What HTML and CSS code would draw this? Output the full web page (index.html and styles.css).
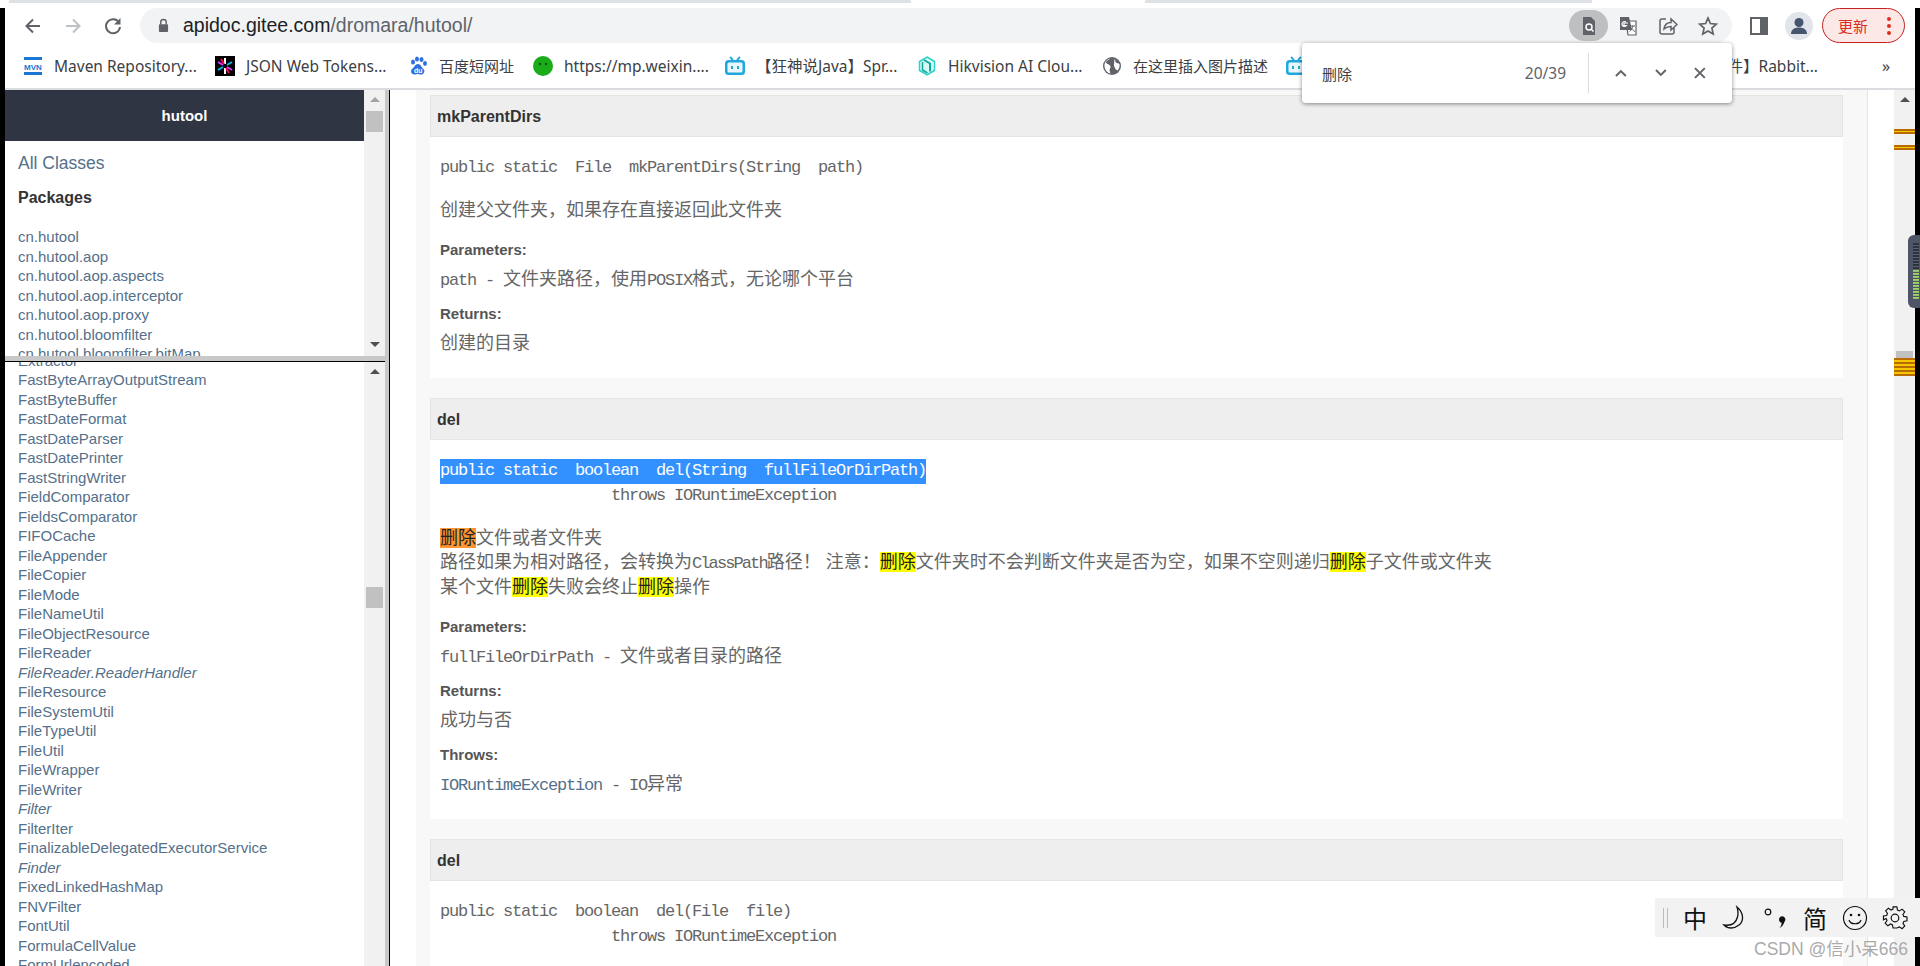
FILE: index.html
```html
<!DOCTYPE html>
<html lang="zh-CN">
<head>
    <meta charset="UTF-8">
    <title>hutool</title>
    <link rel="stylesheet" href="styles.css">
</head>
<body>
    <div class="tab-strip">
        <div class="tab-line tab-line-left"></div>
        <div class="tab-active"></div>
        <div class="tab-line tab-line-right"></div>
    </div>
    <div class="frame">
        <div class="toolbar">
            <div class="nav-buttons">
                <svg class="nav-icon" viewBox="0 0 20 20"><path d="M17 10H4M10 3.5L3.5 10l6.5 6.5" fill="none" stroke="#5f6368" stroke-width="2"/></svg>
                <svg class="nav-icon" viewBox="0 0 20 20"><path d="M3 10h13M10 3.5l6.500 6.500-6.500 6.500" fill="none" stroke="#bdc1c6" stroke-width="2"/></svg>
                <svg class="nav-icon" viewBox="0 0 20 20"><path d="M16 6.500A7 7 0 1 0 17 11" fill="none" stroke="#5f6368" stroke-width="2"/><path d="M17.500 2v6.500H11z" fill="#5f6368"/></svg>
            </div>
            <div class="address-bar">
                <svg class="lock" viewBox="0 0 12 16"><path d="M3 7V4.500a3 3 0 0 1 6 0V7" fill="none" stroke="#5f6368" stroke-width="1.600"/><rect x="1" y="6.500" width="10" height="8.500" rx="1" fill="#5f6368"/></svg>
                <span class="url">apidoc.gitee.com<span class="url-path">/dromara/hutool/</span></span>
                <div class="address-actions">
                    <span class="action-active">
                        <svg class="action-icon" viewBox="0 0 20 20"><path d="M4 1h8l4 4v14H4z" fill="#5f6368"/><circle cx="10" cy="11" r="3" fill="none" stroke="#fff" stroke-width="1.500"/><path d="M12 13l2.500 2.500" stroke="#fff" stroke-width="1.500"/></svg>
                    </span>
                    <svg class="action-icon" viewBox="0 0 20 20"><path d="M8 5h10v14H10z" fill="#fff" stroke="#5f6368" stroke-width="1.200"/><path d="M2 1h9l3 13H2z" fill="#5f6368"/><path d="M10 7H6v2.500h2.500A2.500 2.500 0 1 1 8 6" fill="none" stroke="#fff" stroke-width="1.200"/><path d="M12 10h5M15 9.500c-.4 3-2 5-3.500 6M13 12c1 1.500 2.500 3 4 3.500" fill="none" stroke="#5f6368"/></svg>
                    <svg class="action-icon" viewBox="0 0 20 20"><path d="M8 3H4a2 2 0 0 0-2 2v11a2 2 0 0 0 2 2h10a2 2 0 0 0 2-2v-4" fill="none" stroke="#5f6368" stroke-width="1.500"/><path d="M6 13c.5-4 3-6.500 7-6.500V3l6 5.500-6 5.500v-3.500c-3 0-5 .8-7 2.500z" fill="none" stroke="#5f6368" stroke-width="1.500"/></svg>
                    <svg class="action-icon" viewBox="0 0 20 20"><path d="M10 2l2.400 5.500 6 .6-4.500 4 1.300 5.900L10 15l-5.200 3 1.300-5.900-4.500-4 6-.6z" fill="none" stroke="#5f6368" stroke-width="1.700"/></svg>
                </div>
            </div>
            <div class="toolbar-right">
                <svg class="panel-icon" viewBox="0 0 18 18"><rect x="1" y="1" width="16" height="16" fill="none" stroke="#5f6368" stroke-width="2"/><rect x="10" y="1" width="7" height="16" fill="#5f6368"/></svg>
                <span class="avatar">
                    <svg viewBox="0 0 28 28" width="28" height="28"><circle cx="14" cy="10.500" r="4.500" fill="#46566d"/><path d="M6 22c0-4.500 3.500-6.500 8-6.500s8 2 8 6.500z" fill="#46566d"/></svg>
                </span>
                <span class="update-pill">
                    <span>更新</span>
                    <span class="update-dots"><i></i><i></i><i></i></span>
                </span>
            </div>
        </div>

        <div class="bookmarks">
            <a class="bookmark bm-1">
                <svg class="bm-icon" viewBox="0 0 20 20"><rect x="1" y="1" width="18" height="3" fill="#1976d2"/><rect x="1" y="16" width="18" height="3" fill="#1976d2"/><text x="10" y="13.500" text-anchor="middle" class="mvn-text">MVN</text></svg>
                <span>Maven Repository...</span>
            </a>
            <a class="bookmark bm-2">
                <svg class="bm-icon" viewBox="0 0 20 20"><rect width="20" height="20" fill="#000"/><path d="M10 2v6M10 12v6" stroke="#fff" stroke-width="2"/><path d="M3 6l5 3M12 11l5 3" stroke="#d63aff" stroke-width="2"/><path d="M3 14l5-3M12 9l5-3" stroke="#00b9f1" stroke-width="2"/><path d="M6 3l3 5M11 12l3 5" stroke="#fb015b" stroke-width="2"/></svg>
                <span>JSON Web Tokens...</span>
            </a>
            <a class="bookmark bm-3">
                <svg class="bm-icon" viewBox="0 0 20 20"><g fill="#2f6fe0"><ellipse cx="5" cy="6" rx="2" ry="2.600"/><ellipse cx="9" cy="3" rx="2" ry="2.600"/><ellipse cx="13.500" cy="3.500" rx="2" ry="2.600"/><ellipse cx="17" cy="7.500" rx="1.900" ry="2.400"/><path d="M10 8c3 0 3 3 5.500 5 2 2 .5 6-3 5.500-1-.2-1.500-.5-2.500-.5s-2 .5-3.500.5c-3.500 0-4.500-4-2-6C6.500 11 7 8 10 8z"/></g><text x="10.200" y="17" text-anchor="middle" class="du-text">du</text></svg>
                <span class="bm-cjk">百度短网址</span>
            </a>
            <a class="bookmark bm-4">
                <svg class="bm-icon" viewBox="0 0 20 20"><circle cx="10" cy="10" r="10" fill="#1aad19"/><circle cx="7" cy="8" r="1.300" fill="#0b5c0a"/><circle cx="13" cy="8" r="1.300" fill="#0b5c0a"/></svg>
                <span>https://mp.weixin....</span>
            </a>
            <a class="bookmark bm-5">
                <svg class="bm-icon" viewBox="0 0 20 20"><path d="M5 1l3 3M15 1l-3 3" stroke="#20a8dc" stroke-width="1.800"/><rect x="0" y="4" width="20" height="15" rx="3.500" fill="#20a8dc"/><rect x="2.500" y="6.500" width="15" height="10" rx="1.500" fill="#e9f7fc"/><rect x="6" y="10" width="2" height="3" fill="#20a8dc"/><rect x="12" y="10" width="2" height="3" fill="#20a8dc"/></svg>
                <span>【狂神说Java】Spr...</span>
            </a>
            <a class="bookmark bm-6">
                <svg class="bm-icon" viewBox="0 0 20 20"><path d="M10 1l7.500 4.500v9L10 19l-7.500-4.500v-9z" fill="#d4fbf6" stroke="#2ad4c6" stroke-width="1.500"/><path d="M7 4l6 3.500v8" fill="none" stroke="#16a59a" stroke-width="2"/><path d="M5.500 6v8l5 3" fill="none" stroke="#16a59a" stroke-width="1.500"/></svg>
                <span>Hikvision AI Clou...</span>
            </a>
            <a class="bookmark bm-7">
                <svg class="bm-icon" viewBox="0 0 20 20"><circle cx="10" cy="10" r="9" fill="#5f6368"/><path d="M8 2.500c-1 1.500-3.500 2-4 3.500s2.500 2 3.500 3 1.500 2 .5 3.500 0 3.500.5 5c-3-.5-5.500-3-6-7C2 7 4.500 3.500 8 2.500zM13 3c.5 1.500 0 2.500 1 3.500s2.500.5 3.500 1.500c.5 2.500-.5 5-2 6.500-1-.5-2-1-2.500-2.500s-1.500-2-1-4S12 4 13 3z" fill="#fff"/></svg>
                <span class="bm-cjk">在这里插入图片描述</span>
            </a>
            <a class="bookmark bm-8">
                <svg class="bm-icon" viewBox="0 0 20 20"><path d="M5 1l3 3M15 1l-3 3" stroke="#20a8dc" stroke-width="1.800"/><rect x="0" y="4" width="20" height="15" rx="3.500" fill="#20a8dc"/><rect x="2.500" y="6.500" width="15" height="10" rx="1.500" fill="#e9f7fc"/><rect x="6" y="10" width="2" height="3" fill="#20a8dc"/><rect x="12" y="10" width="2" height="3" fill="#20a8dc"/></svg>
                <span>件】Rabbit...</span>
            </a>
            <span class="bm-more">»</span>
        </div>

        <div class="window">
            <aside class="sidebar">
                <div class="pane pane-top">
                    <div class="pane-content">
                        <div class="project-title">hutool</div>
                        <a class="all-classes">All Classes</a>
                        <h4 class="packages-title">Packages</h4>
                        <ul class="class-list">
                            <li>cn.hutool</li>
                            <li>cn.hutool.aop</li>
                            <li>cn.hutool.aop.aspects</li>
                            <li>cn.hutool.aop.interceptor</li>
                            <li>cn.hutool.aop.proxy</li>
                            <li>cn.hutool.bloomfilter</li>
                            <li>cn.hutool.bloomfilter.bitMap</li>
                        </ul>
                    </div>
                    <div class="scrollbar">
                        <span class="arrow-up"></span>
                        <span class="thumb thumb-packages"></span>
                        <span class="arrow-down"></span>
                    </div>
                </div>
                <div class="splitter"></div>
                <div class="pane pane-bottom">
                    <div class="pane-content">
                        <ul class="class-list classes">
                            <li>Extractor</li>
                            <li>FastByteArrayOutputStream</li>
                            <li>FastByteBuffer</li>
                            <li>FastDateFormat</li>
                            <li>FastDateParser</li>
                            <li>FastDatePrinter</li>
                            <li>FastStringWriter</li>
                            <li>FieldComparator</li>
                            <li>FieldsComparator</li>
                            <li>FIFOCache</li>
                            <li>FileAppender</li>
                            <li>FileCopier</li>
                            <li>FileMode</li>
                            <li>FileNameUtil</li>
                            <li>FileObjectResource</li>
                            <li>FileReader</li>
                            <li class="iface">FileReader.ReaderHandler</li>
                            <li>FileResource</li>
                            <li>FileSystemUtil</li>
                            <li>FileTypeUtil</li>
                            <li>FileUtil</li>
                            <li>FileWrapper</li>
                            <li>FileWriter</li>
                            <li class="iface">Filter</li>
                            <li>FilterIter</li>
                            <li>FinalizableDelegatedExecutorService</li>
                            <li class="iface">Finder</li>
                            <li>FixedLinkedHashMap</li>
                            <li>FNVFilter</li>
                            <li>FontUtil</li>
                            <li>FormulaCellValue</li>
                            <li>FormUrlencoded</li>
                        </ul>
                    </div>
                    <div class="scrollbar">
                        <span class="arrow-up"></span>
                        <span class="thumb thumb-classes"></span>
                    </div>
                </div>
            </aside>

            <main class="main">
                <div class="doc-column">
                    <section class="method">
                        <h3 class="method-name">mkParentDirs</h3>
                        <div class="method-body">
                            <pre class="signature en">public static  File  mkParentDirs(String  path)</pre>
                            <p class="desc">创建父文件夹，如果存在直接返回此文件夹</p>
                            <h5 class="label">Parameters:</h5>
                            <p class="value"><span class="en">path - </span>文件夹路径，使用<span class="en">POSIX</span>格式，无论哪个平台</p>
                            <h5 class="label">Returns:</h5>
                            <p class="value">创建的目录</p>
                        </div>
                    </section>

                    <section class="method">
                        <h3 class="method-name">del</h3>
                        <div class="method-body">
                            <pre class="signature en"><span class="selected">public static  boolean  del(String  fullFileOrDirPath)</span>
                   throws IORuntimeException</pre>
                            <p class="desc"><mark class="current">删除</mark>文件或者文件夹<br>路径如果为相对路径，会转换为<span class="en en-tight">ClassPath</span>路径！ 注意：<mark>删除</mark>文件夹时不会判断文件夹是否为空，如果不空则递归<mark>删除</mark>子文件或文件夹<br>某个文件<mark>删除</mark>失败会终止<mark>删除</mark>操作</p>
                            <h5 class="label">Parameters:</h5>
                            <p class="value"><span class="en">fullFileOrDirPath - </span>文件或者目录的路径</p>
                            <h5 class="label">Returns:</h5>
                            <p class="value">成功与否</p>
                            <h5 class="label">Throws:</h5>
                            <p class="value"><span class="en link">IORuntimeException</span><span class="en"> - IO</span>异常</p>
                        </div>
                    </section>

                    <section class="method">
                        <h3 class="method-name">del</h3>
                        <div class="method-body">
                            <pre class="signature en">public static  boolean  del(File  file)
                   throws IORuntimeException</pre>
                        </div>
                    </section>
                </div>
                <div class="scrollbar scrollbar-main">
                    <span class="arrow-up"></span>
                    <span class="hit hit-a"></span>
                    <span class="hit hit-b"></span>
                    <span class="thumb thumb-main"></span>
                    <span class="hit-group"></span>
                </div>
            </main>
        </div>
    </div>

    <!-- find in page popup -->
    <div class="find-bar">
        <span class="find-text">删除</span>
        <span class="find-count">20/39</span>
        <span class="find-sep"></span>
        <svg class="find-icon" viewBox="0 0 16 16"><path d="M3 11l5-5 5 5" fill="none" stroke="#5f6368" stroke-width="2"/></svg>
        <svg class="find-icon" viewBox="0 0 16 16"><path d="M3 5l5 5 5-5" fill="none" stroke="#5f6368" stroke-width="2"/></svg>
        <svg class="find-icon" viewBox="0 0 16 16"><path d="M3 3l10 10M13 3L3 13" fill="none" stroke="#5f6368" stroke-width="2"/></svg>
    </div>

    <!-- floating widget on the window edge -->
    <div class="edge-widget">
        <span class="meter meter-off"></span>
        <span class="meter meter-on"></span>
    </div>

    <!-- input method toolbar -->
    <div class="ime-bar">
        <span class="ime-handle"></span>
        <span class="ime-item">中</span>
        <svg class="ime-svg" viewBox="0 0 26 26"><path d="M15 2c7 6 7 14 2 18-5 4-11 4-15 0 7 1 12-2 13.500-8C16.500 8 16 5 15 2z" fill="none" stroke="#111" stroke-width="1.300"/></svg>
        <svg class="ime-svg" viewBox="0 0 26 26"><circle cx="6" cy="7" r="2.800" fill="none" stroke="#111" stroke-width="1.200"/><path d="M17 14.500a3.200 3.200 0 1 1 5.500 2.200c-.8 2.800-2.500 5-5 6.300 1.200-1.500 2-3 2.200-5.300-1.500 0-2.700-1.500-2.700-3.200z" fill="#111"/></svg>
        <span class="ime-item">简</span>
        <svg class="ime-svg" viewBox="0 0 26 26"><circle cx="13" cy="13" r="11.500" fill="none" stroke="#111" stroke-width="1.200"/><circle cx="9" cy="10" r="1.300" fill="#111"/><circle cx="17" cy="10" r="1.300" fill="#111"/><path d="M7 15c1.500 5 10.500 5 12 0" fill="none" stroke="#111" stroke-width="1.200"/></svg>
        <svg class="ime-svg" viewBox="0 0 26 26"><circle cx="13" cy="13" r="3.800" fill="none" stroke="#111" stroke-width="1.200"/><path d="M11 2h4l.6 3.300 2 .9 2.800-1.900 2.800 2.800-1.900 2.800.9 2 3.300.6v4l-3.300.6-.9 2 1.900 2.800-2.800 2.800-2.800-1.900-2 .9L15 24h-4l-.6-3.300-2-.9-2.800 1.900-2.800-2.800 1.900-2.800-.9-2L1 15.500v-4l3.300-.6.900-2-1.900-2.800 2.800-2.800 2.800 1.900 2-.9z" transform="translate(.500 0) scale(.96)" fill="none" stroke="#111" stroke-width="1.200"/></svg>
    </div>
    <div class="watermark">CSDN @信小呆666</div>
</body>
</html>
```

FILE: styles.css
```css
* {
    box-sizing: border-box;
}

body {
    margin: 0;
    width: 1920px;
    height: 966px;
    overflow: hidden;
    position: relative;
    background-color: #fff;
    font-family: "Liberation Sans", "Noto Sans CJK SC", sans-serif;
}

/* tab strip */
.tab-strip {
    display: flex;
    height: 8px;
    background-color: #fff;
}

.tab-line {
    height: 3px;
    background-color: #dee1e6;
}

.tab-line-left {
    margin-left: 9px;
    width: 902px;
}

.tab-active {
    width: 234px;
}

.tab-line-right {
    width: 447px;
}

.frame {
    display: flex;
    flex-direction: column;
    height: 958px;
    border-left: 5px solid #000;
    border-right: 5px solid #000;
}

/* toolbar */
.toolbar {
    display: flex;
    align-items: center;
    height: 35px;
    flex-shrink: 0;
}

.nav-buttons {
    display: flex;
    gap: 20px;
    margin-left: 18px;
    width: 117px;
}

.nav-icon {
    width: 20px;
    height: 20px;
}

.address-bar {
    display: flex;
    align-items: center;
    width: 1592px;
    height: 35px;
    border-radius: 18px;
    background-color: #f1f3f4;
    padding-left: 18px;
}

.lock {
    width: 11px;
    height: 15px;
}

.url {
    margin-left: 14px;
    font-size: 19.500px;
    color: #202124;
}

.url-path {
    color: #5f6368;
}

.address-actions {
    display: flex;
    align-items: center;
    margin-left: auto;
    margin-right: 14px;
    gap: 20px;
}

.action-active {
    display: flex;
    align-items: center;
    justify-content: center;
    width: 39px;
    height: 31px;
    margin-right: -10px;
    border-radius: 16px;
    background-color: #bdbfc1;
}

.action-icon {
    width: 20px;
    height: 20px;
}

.toolbar-right {
    display: flex;
    align-items: center;
    margin-left: 18px;
}

.panel-icon {
    width: 18px;
    height: 18px;
}

.avatar {
    display: block;
    width: 28px;
    height: 28px;
    margin-left: 17px;
    border-radius: 50%;
    background-color: #e1e4ea;
}

.update-pill {
    display: flex;
    align-items: center;
    width: 83px;
    height: 35px;
    margin-left: 9px;
    padding-left: 15px;
    border: 1px solid #c5221f;
    border-radius: 18px;
    background-color: #fce8e6;
    color: #d93025;
    font-size: 15px;
}

.update-dots {
    display: flex;
    flex-direction: column;
    gap: 3px;
    margin-left: 19px;
}

.update-dots i {
    display: block;
    width: 4px;
    height: 4px;
    border-radius: 50%;
    background-color: #d93025;
}

/* bookmarks */
.bookmarks {
    display: flex;
    align-items: center;
    height: 47px;
    flex-shrink: 0;
    padding-left: 18px;
    border-bottom: 2px solid #dadce0;
    font-family: "Noto Sans", "Noto Sans CJK SC", sans-serif;
    font-size: 15.500px;
    color: #3c4043;
}

.bookmark {
    display: flex;
    align-items: center;
    gap: 11px;
    white-space: nowrap;
    overflow: hidden;
}

.bm-1 { width: 192px; }
.bm-2 { width: 193px; }
.bm-3 { width: 125px; }
.bm-4 { width: 192px; }
.bm-5 { width: 192px; }
.bm-6 { width: 185px; }
.bm-7 { width: 184px; }
.bm-8 { width: 532px; justify-content: space-between; }

.bm-cjk {
    font-size: 15px;
}

.bm-icon {
    width: 20px;
    height: 20px;
    flex-shrink: 0;
}

.bm-more {
    margin-left: 64px;
    font-size: 16px;
}

.mvn-text {
    font: bold 8px "Liberation Sans", sans-serif;
    fill: #1976d2;
}

.du-text {
    font: bold 7px "Liberation Sans", sans-serif;
    fill: #fff;
}

/* frames area */
.window {
    display: flex;
    flex: 1;
    min-height: 0;
}

.sidebar {
    display: flex;
    flex-direction: column;
    width: 385px;
    flex-shrink: 0;
    border-right: 1px solid #000;
    background-color: #c8c8c8;
    padding-right: 4px;
}

.pane {
    display: flex;
    background-color: #fff;
    overflow: hidden;
}

.pane-top {
    height: 266px;
}

.pane-bottom {
    flex: 1;
    min-height: 0;
}

.splitter {
    height: 6px;
    flex-shrink: 0;
    background-color: #c8c8c8;
    border-bottom: 1px solid #000;
}

.pane-content {
    width: 359px;
    overflow: hidden;
}

.project-title {
    height: 51px;
    line-height: 51px;
    text-align: center;
    background-color: #2f3542;
    color: #fff;
    font-size: 15px;
    font-weight: bold;
}

.all-classes {
    display: block;
    margin: 11px 0 0 13px;
    font-size: 17.500px;
    line-height: 22px;
    color: #55708a;
}

.packages-title {
    margin: 14px 0 0 13px;
    font-size: 16px;
    line-height: 20px;
    color: #333;
}

.class-list {
    list-style: none;
    margin: 19px 0 0 13px;
    padding: 0;
    font-size: 15px;
    line-height: 19.500px;
    color: #55708a;
    white-space: nowrap;
}

.classes {
    margin-top: -11.500px;
}

.iface {
    font-style: italic;
}

/* scrollbars */
.scrollbar {
    position: relative;
    width: 21px;
    flex-shrink: 0;
    background-color: #f1f1f1;
}

.arrow-up,
.arrow-down {
    position: absolute;
    left: 6px;
    width: 0;
    height: 0;
    border-left: 5px solid transparent;
    border-right: 5px solid transparent;
}

.arrow-up {
    top: 7px;
    border-bottom: 5px solid #505050;
}

.arrow-down {
    bottom: 9px;
    border-top: 5px solid #505050;
}

.pane-top .arrow-up {
    border-bottom-color: #a3a3a3;
}

.thumb {
    position: absolute;
    left: 2px;
    width: 17px;
    height: 21px;
    background-color: #c1c1c1;
}

.thumb-packages {
    top: 21px;
}

.thumb-classes {
    top: 225px;
}

.thumb-main {
    top: 261px;
}

.hit {
    position: absolute;
    left: 0;
    width: 21px;
    height: 5px;
    background-color: #f7c600;
    border-top: 2px solid #b86b00;
    border-bottom: 2px solid #b86b00;
}

.hit-a {
    top: 39px;
}

.hit-b {
    top: 55px;
}

.hit-group {
    position: absolute;
    left: 0;
    top: 268px;
    width: 21px;
    height: 18px;
    background: repeating-linear-gradient(#b86b00 0, #b86b00 2px, #f7c600 2px, #f7c600 4px);
}

/* main frame */
.main {
    display: flex;
    flex: 1;
    min-width: 0;
    background-color: #fff;
}

.doc-column {
    width: 1452px;
    height: 876px;
    margin-left: 26px;
    margin-right: 26px;
    padding: 5px 24px 0 14px;
    overflow: hidden;
    background-color: #f8f8f8;
    border-right: 1px solid #e5e5e5;
    flex-shrink: 0;
}

.method {
    margin-bottom: 20px;
    background-color: #fff;
}

.method-name {
    height: 42px;
    margin: 0;
    padding-left: 6px;
    border: 1px solid #e5e5e5;
    background-color: #eee;
    font-size: 16px;
    line-height: 42px;
    color: #333;
}

.method-body {
    padding: 19px 10px 23px;
    font-size: 18px;
    line-height: 24.500px;
    color: #666;
}

.en,
.signature {
    font-family: "Liberation Mono", monospace;
    font-size: 17px;
    letter-spacing: -1.200px;
    line-height: 1;
}

.en-tight {
    letter-spacing: -1.900px;
}

.signature {
    margin: 0;
    line-height: 24.500px;
}

.selected {
    display: inline-block;
    height: 25px;
    background-color: #3390ff;
    color: #fff;
}

.link {
    color: #55708a;
}

.desc {
    margin: 17px 0 0;
}

mark {
    background-color: #ff0;
    color: #222;
}

mark.current {
    background-color: #ff9632;
}

.label {
    margin: 18px 0 6.500px;
    font-size: 15px;
    font-weight: bold;
    line-height: 20px;
    color: #555;
}

.value {
    margin: 0;
}

.value + .label {
    margin-top: 13px;
}

/* find bar */
.find-bar {
    position: absolute;
    left: 1302px;
    top: 43px;
    display: flex;
    align-items: center;
    width: 430px;
    height: 60px;
    padding-left: 20px;
    border-radius: 4px;
    background-color: #fff;
    box-shadow: 0 1px 4px rgba(0, 0, 0, 0.45);
    font-family: "Noto Sans", "Noto Sans CJK SC", sans-serif;
    font-size: 15px;
    color: #3c4043;
}

.find-text {
    width: 206px;
}

.find-count {
    width: 64px;
    color: #5f6368;
    font-size: 15.500px;
}

.find-sep {
    width: 1px;
    height: 40px;
    margin-right: 24px;
    background-color: #dadce0;
}

.find-icon {
    width: 16px;
    height: 16px;
    margin-right: 24px;
}

/* widget */
.edge-widget {
    position: absolute;
    left: 1908px;
    top: 235px;
    width: 12px;
    height: 73px;
    padding: 8px 0 0 5px;
    border-radius: 6px 0 0 6px;
    background-color: #4d5567;
}

.meter {
    display: block;
    width: 6px;
}

.meter-off {
    height: 27px;
    background: repeating-linear-gradient(#2e3340 0, #2e3340 2px, #5a6070 2px, #5a6070 3px);
}

.meter-on {
    height: 30px;
    background: repeating-linear-gradient(#c3cf5a 0, #6fc27b 2px, #4d5567 2px, #4d5567 3px),
        #3ab7a0;
}

/* input method bar */
.ime-bar {
    position: absolute;
    left: 1655px;
    top: 898px;
    display: flex;
    align-items: center;
    width: 265px;
    height: 39px;
    padding-left: 8px;
    background-color: #f2f2f2;
}

.ime-handle {
    width: 5px;
    height: 20px;
    margin-right: 14px;
    border-left: 1px solid #bbb;
    border-right: 1px solid #bbb;
    flex-shrink: 0;
}

.ime-item {
    width: 26px;
    margin-right: 14px;
    flex-shrink: 0;
    font-family: "Noto Sans CJK SC", sans-serif;
    font-size: 24px;
    line-height: 30px;
    text-align: center;
    color: #111;
}

.ime-svg {
    width: 26px;
    height: 26px;
    margin-right: 14px;
    flex-shrink: 0;
}

.watermark {
    position: absolute;
    left: 1754px;
    top: 938px;
    font-size: 17.500px;
    line-height: 22px;
    color: #aaa;
    white-space: nowrap;
}
```
